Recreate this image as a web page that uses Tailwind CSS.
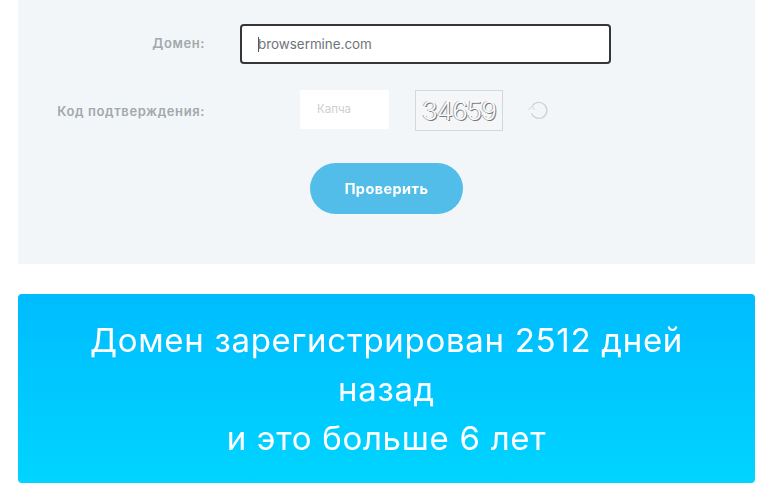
<!DOCTYPE html>
<html lang="ru">
<head>
    <meta charset="UTF-8">
    <title>Проверка домена</title>
    <script src="https://cdn.jsdelivr.net/npm/@tailwindcss/browser@4"></script>
</head>
<body class="bg-white h-[492px] overflow-hidden font-['Inter','Noto_Sans',sans-serif]">
    <div class="pl-[18px] pr-[13px] [filter:blur(0.4px)]">
        <!-- форма -->
        <div class="bg-[#f2f6f8] h-[264px] pt-6">
            <div class="flex items-center">
                <label class="w-[187px] text-right text-[13px] tracking-[0.6px] font-semibold text-[#a3a8ab]">Домен:</label>
                <div class="ml-[35px] w-[371px] h-10 bg-white border-2 border-[#33373a] rounded-[4px] flex items-center pl-4 text-[13.4px] text-[#6f7478]">
                    <span class="w-px h-[15px] bg-[#555] -mr-px"></span>browsermine.com
                </div>
            </div>
            <div class="flex items-start mt-[26px]">
                <label class="w-[187px] mt-3 text-right text-[13px] tracking-[0.6px] font-semibold text-[#a3a8ab]">Код подтверждения:</label>
                <div class="ml-[95px] w-[89px] h-[39px] bg-white flex items-center pl-[17px] text-[11.5px] text-[#cdd0d2]">Капча</div>
                <div class="ml-[26px] w-[88px] h-[41px] border border-[#d5d8da] bg-[#f5f6f7] flex items-center justify-center text-[26px] font-light tracking-[-1px] text-[#fafbfb] [text-shadow:1px_1px_0_#777b7e,-1px_0_0_#a5a9ac]">34659</div>
                <svg class="ml-[24px] mt-[9px]" width="22" height="22" viewBox="0 0 22 22" fill="none" stroke="#d0d4d6" stroke-width="1.4">
                    <path d="M5.5 6.5a8 8 0 1 1-1 8"/>
                    <path d="M1.5 11l3.5-4 2.5 4" stroke-width="1"/>
                </svg>
            </div>
            <div class="flex justify-center mt-[32px]">
                <button class="w-[153px] h-[51px] rounded-full bg-[#52bde9] text-white text-[14.5px] tracking-[0.4px] font-bold">Проверить</button>
            </div>
        </div>
        <!-- результат -->
        <div class="mt-[30px] h-[189px] rounded-[4px] bg-gradient-to-b from-[#00bcff] to-[#00d4ff] pt-[22px] text-center text-white text-[33px] leading-[49px] font-normal tracking-[0.7px]">
            <p class="w-[640px] mx-auto">Домен зарегистрирован 2512 дней назад</p>
            <p>и это больше 6 лет</p>
        </div>
    </div>
</body>
</html>
